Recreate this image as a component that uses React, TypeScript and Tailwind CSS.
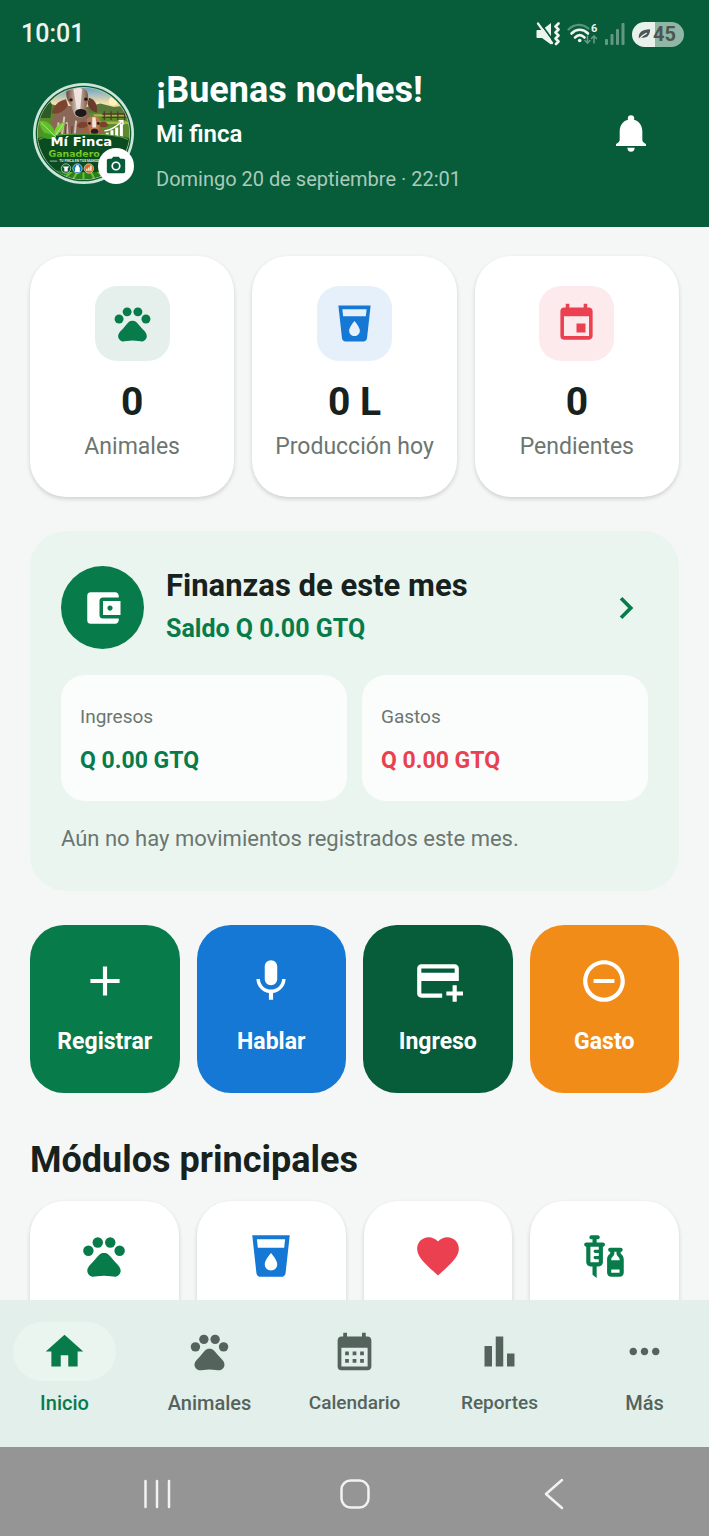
import { useState } from "react";
import {
  MdAccountBalanceWallet,
  MdAdd,
  MdAddCard,
  MdBarChart,
  MdCalendarMonth,
  MdCameraAlt,
  MdChevronRight,
  MdEvent,
  MdFavorite,
  MdHome,
  MdLocalDrink,
  MdMic,
  MdMoreHoriz,
  MdPets,
  MdRemoveCircleOutline,
  MdVaccines,
} from "react-icons/md";

const stats = [
  { label: "Animales", value: "0", icon: MdPets, style: "bg-[#e5f0ec] text-[#087b4b]" },
  { label: "Producción hoy", value: "0 L", icon: MdLocalDrink, style: "bg-[#e6f0fa] text-[#1478d4]" },
  { label: "Pendientes", value: "0", icon: MdEvent, style: "bg-[#fdeaec] text-[#ea4050]" },
];

const actions = [
  { label: "Registrar", icon: MdAdd, style: "bg-[#087b4b]" },
  { label: "Hablar", icon: MdMic, style: "bg-[#1478d4]" },
  { label: "Ingreso", icon: MdAddCard, style: "bg-[#075c3a]" },
  { label: "Gasto", icon: MdRemoveCircleOutline, style: "bg-[#f28c18]" },
];

const modules = [
  { name: "Animales", icon: MdPets, style: "text-[#087b4b]" },
  { name: "Producción", icon: MdLocalDrink, style: "text-[#1478d4]" },
  { name: "Salud", icon: MdFavorite, style: "text-[#ea4050]" },
  { name: "Vacunas", icon: MdVaccines, style: "text-[#087b4b]" },
];

const tabs = [
  { label: "Inicio", icon: MdHome, text: "text-xl" },
  { label: "Animales", icon: MdPets, text: "text-xl" },
  { label: "Calendario", icon: MdCalendarMonth, text: "text-[19px]" },
  { label: "Reportes", icon: MdBarChart, text: "text-[19px]" },
  { label: "Más", icon: MdMoreHoriz, text: "text-xl" },
];

function StatusBar() {
  return (
    <div className="flex h-[70px] items-center justify-between pr-[25px] pb-0.5 pl-[21px] text-[#eef5f1]">
      <span className="text-[25px] font-medium">10:01</span>
      <div className="flex items-center gap-[7px]">
        <svg width="24" height="24" viewBox="0 0 24 24" fill="none" stroke="currentColor">
          <path d="M1.500 8h4.500l9-7v21.500l-9-6.500H1.500c-.6 0-1-.4-1-1V9c0-.6.4-1 1-1z" fill="currentColor" stroke="none" />
          <path d="M3.500 0 17 18.500" stroke="#075c3a" strokeWidth="1.800" />
          <path d="M2 1.500l14 19.500" strokeWidth="2.200" strokeLinecap="round" />
          <path d="M22.500 1.500l-3 3 3 3-3 3 3 3-3 3 3 3-2.500 2.500" strokeWidth="2.600" strokeLinejoin="round" strokeLinecap="round" />
        </svg>
        <svg width="31" height="24" viewBox="0 0 31 24" fill="none" stroke="currentColor" strokeLinecap="round">
          <path d="M1.500 7.500c6-6 14-6 20-1" strokeWidth="2.200" opacity=".35" />
          <path d="M4.500 11.500c5-5 11.500-5 16.500 0M8 15.500c3-3 6.500-3 9.500 0" strokeWidth="2.600" />
          <circle cx="12.700" cy="18.500" r="1.800" fill="currentColor" stroke="none" />
          <path d="M20.500 14v7m-2.500-2.500 2.500 2.500 2.500-2.500M27 21v-7m-2.500 2.500L27 14l2.500 2.500" strokeWidth="1.600" opacity=".4" />
          <text x="24" y="9.500" fontSize="11" fontWeight="700" fill="currentColor" stroke="none">6</text>
        </svg>
        <svg width="20" height="24" viewBox="0 0 20 24" fill="currentColor" opacity=".4">
          <rect x="0" y="17" width="3" height="6" rx="1" />
          <rect x="5.500" y="12" width="3" height="11" rx="1" />
          <rect x="11" y="7" width="3" height="16" rx="1" />
          <rect x="16.500" y="1" width="3" height="22" rx="1" />
        </svg>
        <div className="flex h-[25px] w-[52px] items-center gap-0.5 rounded-full bg-linear-to-r from-[#e9f1ed] from-45% to-[#8fb7a5] to-45% pl-1.5 text-[#4d5652]">
          <svg width="13" height="12" viewBox="0 0 14 12">
            <path d="M1 11C0 5 4 1 13 1c0 6-3 10-9 9z" fill="currentColor" />
            <path d="M1 11.500C4 8 6 6.500 9.500 5" stroke="#e9f1ed" strokeWidth="1.300" fill="none" />
          </svg>
          <span className="text-xl leading-none font-bold">45</span>
        </div>
      </div>
    </div>
  );
}

function FarmLogo() {
  return (
    <svg className="size-full" viewBox="0 0 300 300">
      <defs>
        <clipPath id="disc">
          <circle cx="150" cy="150" r="136" />
        </clipPath>
        <linearGradient id="sky" x1="0" y1="0" x2="0" y2="1">
          <stop offset="0" stopColor="#5f9fce" />
          <stop offset=".7" stopColor="#f8e2a8" />
          <stop offset="1" stopColor="#e9b558" />
        </linearGradient>
        <linearGradient id="hide" x1="0" y1="0" x2="1" y2="0">
          <stop offset="0" stopColor="#6e4334" />
          <stop offset=".5" stopColor="#d8c8bf" />
          <stop offset="1" stopColor="#7c5545" />
        </linearGradient>
        <linearGradient id="lime" x1="0" y1="0" x2="0" y2="1">
          <stop offset="0" stopColor="#a4e62c" />
          <stop offset="1" stopColor="#4fae1c" />
        </linearGradient>
      </defs>
      <circle cx="150" cy="150" r="150" fill="#cfe5da" />
      <circle cx="150" cy="150" r="142" fill="#0b5a32" />
      <circle cx="150" cy="150" r="138" fill="#b9d8a9" />
      <g clipPath="url(#disc)">
        <rect width="300" height="75" fill="url(#sky)" y="10" />
        <circle cx="238" cy="54" r="13" fill="#fff3bd" />
        <path d="M0 72l35-13 35 8 90 4 40-10 40 10 60-7v50H0z" fill="#56783b" />
        <path d="M0 88h300v100H0z" fill="#5d8a2a" />
        <path d="M180 96h120M185 118h115" stroke="#a9b744" strokeWidth="7" />
        <path d="M205 92h85M205 102h85M212 84v26M232 84v26M252 84v26M272 84v26" stroke="#513b22" strokeWidth="4" />
        <path d="M20 62c10-18 30-15 36 2l-4 40H14z" fill="#2d5a25" />
        {/* cow */}
        <path d="M58 175c-10-40-8-85 36-108l70 10 16 98z" fill="#8b6758" />
        <path d="M68 172l8-55M84 172l9-72M104 172l-4-56M122 172l6-60" stroke="#d3c2b9" strokeWidth="6" />
        <path d="M76 172l4-40M95 172l4-50M114 172l2-44" stroke="#5d3b2e" strokeWidth="3" />
        <path d="M98 48C76 52 60 68 56 90c16 4 36-4 48-24z" fill="#7d4331" />
        <path d="M166 44c18 4 26 20 24 44-14-2-24-12-28-26z" fill="#6b3a2b" />
        <path d="M100 22c10-14 48-14 60 2 8 18 2 34-2 48l4 20c-4 14-34 14-40 0l-8-22c-12-16-18-32-14-48z" fill="url(#hide)" />
        <path d="M120 18c8-5 18-5 26 0l-6 60h-10z" fill="#eee4dd" />
        <circle cx="113" cy="50" r="5" fill="#201714" />
        <circle cx="157" cy="48" r="5" fill="#201714" />
        <ellipse cx="142" cy="89" rx="17" ry="12" fill="#1c1919" />
        {/* calf */}
        <path d="M140 175c-2-30 8-48 38-48s40 20 42 48z" fill="#9d6242" />
        <path d="M160 118c-14-8-28 0-30 12 14 6 24 4 32-2zM198 118c12-8 24-2 26 10-12 6-22 4-28-2z" fill="#7c412c" />
        <path d="M160 108c6-12 34-12 40 0l-6 42c-6 10-20 10-26 0z" fill="#b87753" />
        <path d="M176 102h10l2 30h-12z" fill="#f3e5da" />
        <circle cx="168" cy="120" r="4" fill="#201714" />
        <circle cx="194" cy="120" r="4" fill="#201714" />
        <ellipse cx="183" cy="144" rx="11" ry="8" fill="#2b1b1a" />
        {/* chart */}
        <path d="M216 160v-12h9v12zM230 160v-20h9v20zM244 160v-28h9v28zM258 160v-38h9v38z" fill="#fff" />
        <path d="M212 142c20-2 36-12 54-30M254 112h13v13" stroke="#fff" strokeWidth="4" fill="none" />
        <path d="M0 172c30-28 270-28 300 0v128H0z" fill="#0a4b22" />
        <path d="M18 168c40-22 224-22 264 0" stroke="#62a93c" strokeWidth="3" fill="none" />
        <path d="M0 240c70 20 230 20 300 0v60H0z" fill="#27811d" />
        <path d="M70 300l50-40M110 300l25-40M150 300v-40M190 300l-20-40M230 300l-40-40" stroke="#76bd2d" strokeWidth="6" />
        <path d="M30 225h240v22c-40 24-200 24-240 0z" fill="#0a4b22" />
      </g>
      <path d="M18 112c28-2 46 16 50 48-30 0-46-18-50-48z" fill="#5fc02b" />
      <path d="M64 154c-2-20 8-32 30-38-2 22-10 34-30 38z" fill="#7ed338" />
      <path d="M18 150c18-4 38 0 48 14-20 6-38 2-48-14z" fill="#3f9d25" />
      <path d="M24 118l44 42M90 122l-24 34" stroke="#d9f4ad" strokeWidth="2" fill="none" />
      <g fontFamily="'DejaVu Sans', sans-serif" fontWeight="700">
        <text x="52" y="186" fontSize="39" fill="#fff">Mí Finca</text>
        <text x="46" y="219" fontSize="28" fill="url(#lime)">Ganadero</text>
      </g>
      <text x="78" y="236" fontSize="10" fontWeight="700" fill="#e4eee2">TU FINCA EN TUS MANOS</text>
      <path d="M50 232h22" stroke="#e4eee2" strokeWidth="2" />
      <circle cx="98" cy="254" r="14" fill="#11592b" stroke="#cfe5da" strokeWidth="2" />
      <circle cx="132" cy="254" r="14" fill="#1474bd" stroke="#cfe5da" strokeWidth="2" />
      <circle cx="166" cy="254" r="14" fill="#d96d1f" stroke="#cfe5da" strokeWidth="2" />
      <path d="M88 248h20l-5 5v10H93v-10zM128 244h8v4l3 4v12h-14v-12l3-4zM158 261v-6h4v6zm6 0v-10h4v10zm6 0v-15h4v15z" fill="#fff" />
    </svg>
  );
}

function Header() {
  return (
    <header className="shrink-0 bg-[#075c3a] text-white">
      <StatusBar />
      <div className="flex items-center pr-14 pb-[31px] pl-[33px]">
        <button className="relative size-[101px] shrink-0" aria-label="Cambiar foto">
          <FarmLogo />
          <span className="absolute right-0 bottom-0 flex size-9 items-center justify-center rounded-full bg-white text-[#075c3a]">
            <MdCameraAlt size={22} />
          </span>
        </button>
        <div className="ml-[22px] min-w-0 flex-1">
          <h1 className="text-4xl leading-10 font-bold">¡Buenas noches!</h1>
          <p className="mt-2 text-2xl leading-8 font-semibold">Mi finca</p>
          <p className="mt-3 text-[20px] leading-[34px] text-[#a9cbbb]">
            Domingo 20 de septiembre · 22:01
          </p>
        </div>
        <button className="flex w-11 justify-center" aria-label="Notificaciones">
          <svg width="30" height="37" viewBox="0 0 90 111" fill="currentColor">
            <circle cx="45" cy="10" r="9.500" />
            <path d="M11 74V49c0-21 14-36 34-36s34 15 34 36v25c0 5 3 8 11 13v6H0v-6c8-5 11-8 11-13z" />
            <path d="M34 98h22c0 7-4 12-11 12s-11-5-11-12z" />
          </svg>
        </button>
      </div>
    </header>
  );
}

function Finances() {
  return (
    <section className="mt-[34px] rounded-[36px] bg-[#eaf5ef] px-[31px] pt-[35px] pb-[37px]">
      <div className="flex items-center">
        <span className="flex size-[83px] shrink-0 items-center justify-center rounded-full bg-[#087b4b] text-white">
          <MdAccountBalanceWallet size={42} />
        </span>
        <div className="ml-[22px] flex-1 pb-0.5">
          <h2 className="text-[31px] leading-[38px] font-bold">Finanzas de este mes</h2>
          <p className="mt-1.5 text-[25px] leading-9 font-bold text-[#087b4b]">Saldo Q 0.00 GTQ</p>
        </div>
        <button className="text-[#087b4b]" aria-label="Ver finanzas">
          <MdChevronRight size={44} />
        </button>
      </div>
      <div className="mt-[26px] grid grid-cols-2 gap-[15px]">
        <div className="rounded-3xl bg-[#fafdfb] px-[19px] pt-[29px] pb-6">
          <p className="text-[19px] leading-[26px] text-[#6b7671]">Ingresos</p>
          <p className="mt-[15px] text-[23px] leading-8 font-bold text-[#087b4b]">Q 0.00 GTQ</p>
        </div>
        <div className="rounded-3xl bg-[#fafdfb] px-[19px] pt-[29px] pb-6">
          <p className="text-[19px] leading-[26px] text-[#6b7671]">Gastos</p>
          <p className="mt-[15px] text-[23px] leading-8 font-bold text-[#ea4050]">Q 0.00 GTQ</p>
        </div>
      </div>
      <p className="mt-[23px] text-[22px] leading-[30px] text-[#6b7671]">
        Aún no hay movimientos registrados este mes.
      </p>
    </section>
  );
}

function App() {
  const [active, setActive] = useState("Inicio");

  return (
    <div className="flex h-screen flex-col bg-[#f5f7f6] font-['Roboto',sans-serif] text-[#17211d]">
      <Header />
      <main className="min-h-0 flex-1 overflow-y-auto px-[30px] pt-[29px] [scrollbar-width:none]">
        <section className="grid grid-cols-3 gap-[18px]">
          {stats.map(({ label, value, icon: Icon, style }) => (
            <div
              key={label}
              className="flex flex-col items-center rounded-[36px] bg-white pt-[30px] pb-[35px] shadow-[0_2px_4px_rgba(0,0,0,0.16)]"
            >
              <span className={`flex size-[75px] items-center justify-center rounded-[22px] ${style}`}>
                <Icon size={43} />
              </span>
              <p className="mt-[17px] text-[39px] leading-[48px] font-bold">{value}</p>
              <p className="mt-1.5 text-[23px] leading-[30px] text-[#6b7671]">{label}</p>
            </div>
          ))}
        </section>

        <Finances />

        <section className="mt-[34px] grid grid-cols-4 gap-[17px]">
          {actions.map(({ label, icon: Icon, style }) => (
            <button
              key={label}
              className={`flex flex-col items-center rounded-[34px] pt-[31px] pb-9 text-white ${style}`}
            >
              <Icon size={50} />
              <span className="mt-[21px] text-[23px] leading-[30px] font-bold">{label}</span>
            </button>
          ))}
        </section>

        <h2 className="mt-[46px] text-4xl leading-[42px] font-bold">Módulos principales</h2>
        <section className="mt-5 grid grid-cols-4 gap-[18px] pb-6">
          {modules.map(({ name, icon: Icon, style }) => (
            <button
              key={name}
              aria-label={name}
              className={`flex justify-center rounded-[34px] bg-white pt-[30px] pb-20 shadow-[0_2px_4px_rgba(0,0,0,0.16)] ${style}`}
            >
              <Icon size={50} />
            </button>
          ))}
        </section>
      </main>

      <nav className="flex shrink-0 justify-between bg-[#e2efea] px-[13px] pt-[22px] pb-[30px]">
        {tabs.map(({ label, icon: Icon, text }) => (
          <button
            key={label}
            onClick={() => setActive(label)}
            className={`flex w-[103px] flex-col items-center font-medium ${
              active === label ? "text-[#087b4b]" : "text-[#55635d]"
            }`}
          >
            <span
              className={`flex h-[59px] w-full items-center justify-center rounded-full ${
                active === label ? "bg-[#eaf5ef]" : ""
              }`}
            >
              <Icon size={45} />
            </span>
            <span className={`mt-2 leading-7 ${text}`}>{label}</span>
          </button>
        ))}
      </nav>

      <div className="flex h-[89px] shrink-0 items-center justify-between bg-[#959595] px-[133px] pt-1 text-[#f2f2f2]">
        <button aria-label="Recientes">
          <svg width="48" height="32" viewBox="0 0 48 32" fill="none" stroke="currentColor" strokeWidth="2.500" strokeLinecap="round">
            <path d="M12.500 3v26M24 3v26M36 3v26" />
          </svg>
        </button>
        <button aria-label="Inicio del sistema">
          <svg width="48" height="32" viewBox="0 0 48 32" fill="none" stroke="currentColor" strokeWidth="2.500">
            <rect x="10.500" y="2.500" width="27" height="27" rx="9" />
          </svg>
        </button>
        <button aria-label="Atrás">
          <svg width="48" height="32" viewBox="0 0 48 32" fill="none" stroke="currentColor" strokeWidth="2.500" strokeLinecap="round" strokeLinejoin="round">
            <path d="M34 2 18 16l16 14" />
          </svg>
        </button>
      </div>
    </div>
  );
}

export default App;
